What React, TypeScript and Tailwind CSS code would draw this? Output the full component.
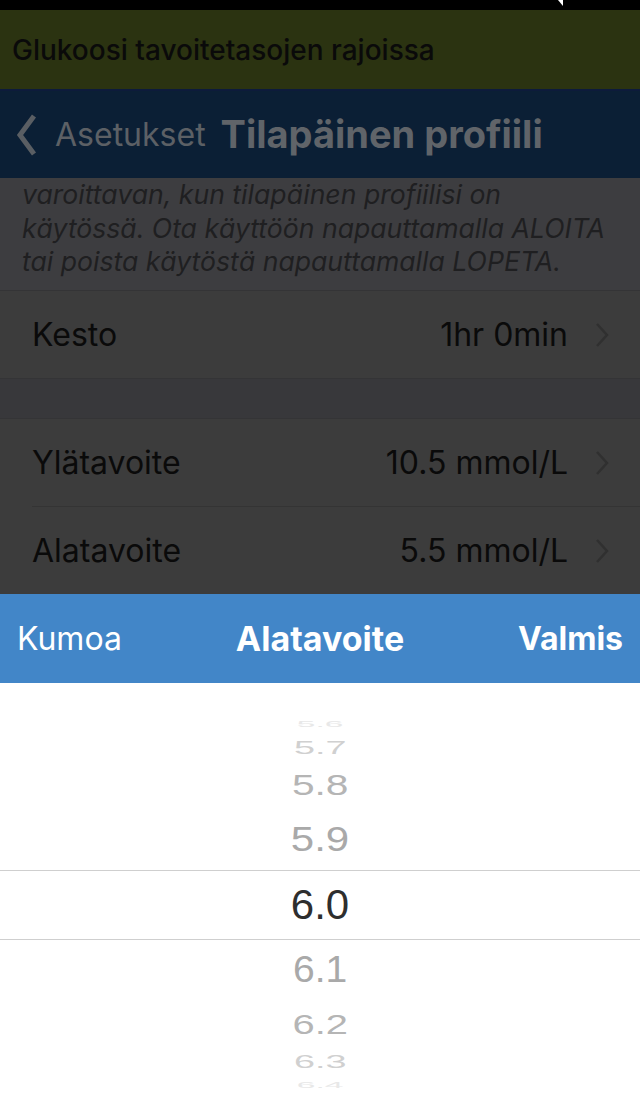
const above = [
  { v: '5.6', h: 'h-[21px]', c: 'text-[#e8e8e8]', s: 'scale-y-[0.22] scale-x-[0.8]' },
  { v: '5.7', h: 'h-[27px]', c: 'text-[#d0d0d0]', s: 'scale-y-[0.45] scale-x-[0.9]' },
  { v: '5.8', h: 'h-[48px]', c: 'text-[#b5b5b5]', s: 'scale-y-[0.7] scale-x-[0.97]' },
  { v: '5.9', h: 'h-[61px]', c: 'text-[#a9a9a9]', s: 'scale-y-[0.82]' },
]

const below = [
  { v: '6.1', h: 'h-[60px]', c: 'text-[#a9a9a9]', s: 'scale-y-[0.88] scale-x-[0.93]' },
  { v: '6.2', h: 'h-[48px]', c: 'text-[#b5b5b5]', s: 'scale-y-[0.68] scale-x-[0.95]' },
  { v: '6.3', h: 'h-[28px]', c: 'text-[#d0d0d0]', s: 'scale-y-[0.45] scale-x-[0.9]' },
  { v: '6.4', h: 'h-[18px]', c: 'text-[#e8e8e8]', s: 'scale-y-[0.2] scale-x-[0.8]' },
]

function RowChevron() {
  return (
    <svg width="14" height="26" viewBox="0 0 14 26" className="shrink-0">
      <path d="M2 2 L12 13 L2 24" fill="none" stroke="#303030" strokeWidth="2.5" />
    </svg>
  )
}

function Row({ label, value }: { label: string; value: string }) {
  return (
    <div className="h-[87px] bg-[#3c3c3c] flex items-center pl-8 pr-[31px] shrink-0">
      <span className="flex-1 text-[32px] text-[#0a0a0a]">{label}</span>
      <span className="text-[32px] text-[#0a0a0a] mr-[27px]">{value}</span>
      <RowChevron />
    </div>
  )
}

export default function App() {
  return (
    <div className="w-[640px] h-[1106px] overflow-hidden flex flex-col bg-white font-['Inter',sans-serif]">
      {/* status bar, cut off */}
      <div className="h-[10px] bg-black relative shrink-0">
        <div className="absolute left-[558px] top-0 w-0 h-0 border-l-[5px] border-l-transparent border-t-[6px] border-t-white" />
      </div>

      <div className="h-[79px] bg-[#2b3311] flex items-center px-3 shrink-0">
        <span className="text-[28px] font-medium text-[#0a0a0a]">Glukoosi tavoitetasojen rajoissa</span>
      </div>

      <div className="h-[89px] bg-[#0b1f35] border-t-2 border-[#0d1b3b] flex items-center pl-4 shrink-0">
        <svg width="22" height="44" viewBox="0 0 22 44">
          <path d="M18 3 L4 22 L18 41" fill="none" stroke="#5a5e63" strokeWidth="5" />
        </svg>
        <span className="ml-[17px] text-[32px] text-[#5c6065]">Asetukset</span>
        <span className="ml-[15px] text-[38px] font-bold text-[#606469]">Tilapäinen profiili</span>
      </div>

      <div className="h-[112px] bg-[#3d3d40] px-[22px] overflow-hidden shrink-0">
        <p className="italic text-[26.6px] leading-[33.5px] text-[#1f1f21] whitespace-nowrap">
          varoittavan, kun tilapäinen profiilisi on
          <br />
          käytössä. Ota käyttöön napauttamalla ALOITA
          <br />
          tai poista käytöstä napauttamalla LOPETA.
        </p>
      </div>

      <div className="border-t border-[#343436]" />
      <Row label="Kesto" value="1hr 0min" />
      <div className="h-[41px] bg-[#38383b] border-y border-[#343436] shrink-0" />
      <Row label="Ylätavoite" value="10.5 mmol/L" />
      <div className="bg-[#3c3c3c] pl-8">
        <div className="border-t border-[#343434]" />
      </div>
      <Row label="Alatavoite" value="5.5 mmol/L" />

      <div className="h-[89px] bg-[#4286c8] flex items-center px-[17px] text-white text-[32px] shrink-0">
        <span className="flex-1">Kumoa</span>
        <span className="font-bold text-[34px]">Alatavoite</span>
        <span className="flex-1 text-right font-bold">Valmis</span>
      </div>

      <div className="flex-1 flex flex-col pt-[30px] font-['Liberation_Sans',sans-serif] text-[42px]">
        {above.map((it) => (
          <div key={it.v} className={`${it.h} flex items-center justify-center overflow-hidden`}>
            <span className={`${it.c} ${it.s} leading-none inline-block`}>{it.v}</span>
          </div>
        ))}
        <div className="h-[70px] border-y border-[#cfcfcf] flex items-center justify-center">
          <span className="text-[#2e2e2e] leading-none">6.0</span>
        </div>
        {below.map((it) => (
          <div key={it.v} className={`${it.h} flex items-center justify-center overflow-hidden`}>
            <span className={`${it.c} ${it.s} leading-none inline-block`}>{it.v}</span>
          </div>
        ))}
      </div>
    </div>
  )
}
